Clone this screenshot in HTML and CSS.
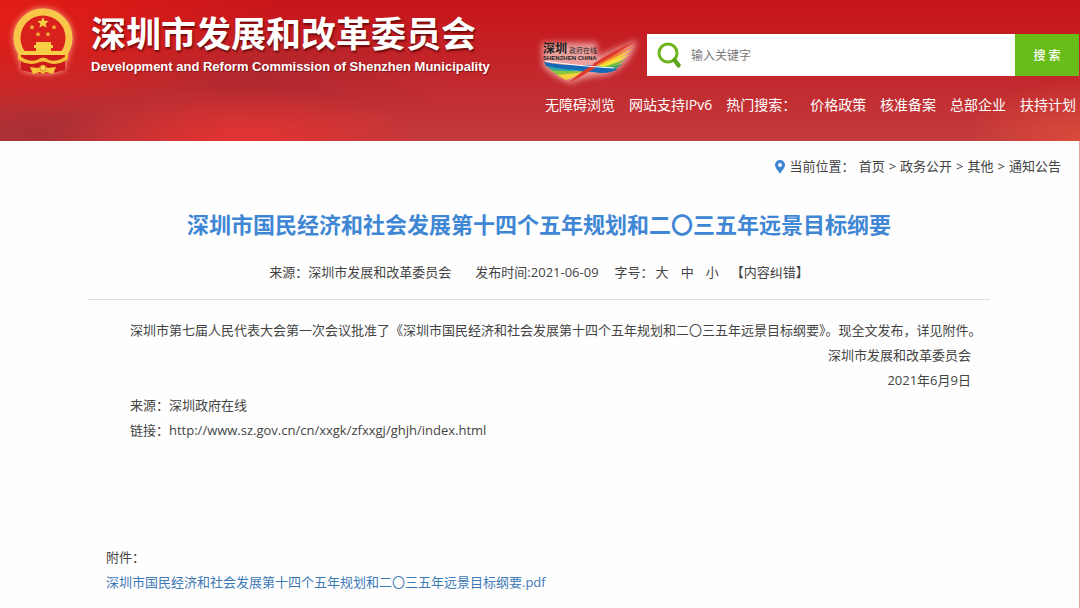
FILE: index.html
```html
<!DOCTYPE html>
<html lang="zh-CN">
<head>
    <meta charset="UTF-8">
    <meta name="viewport" content="width=device-width, initial-scale=1.0">
    <title>深圳市发展和改革委员会</title>
    <link rel="stylesheet" href="styles.css">
</head>
<body>
    <header class="header">
        <div class="brand">
            <svg class="emblem" viewBox="0 0 72 74" aria-hidden="true">
                <path d="M14 52 L15 65 Q36 72 57 65 L58 52Z" fill="#c5161b"/>
                <circle cx="36" cy="33" r="26" fill="#d9201c" stroke="#f8c649" stroke-width="7"/>
                <path d="M14 50 L14 65 Q36 71 58 65 L58 50Z" fill="#cb191b"/>
                <path d="M36 12l1.600 3.800 4.100.3-3.100 2.700 1 4-3.600-2.200-3.600 2.200 1-4-3.100-2.700 4.100-.3z" fill="#f9cf45"/>
                <g fill="#f4b93a">
                    <path id="star" d="M25 19.500l.8 1.700 1.900.2-1.400 1.200.4 1.900-1.700-1-1.700 1 .4-1.900-1.400-1.200 1.900-.2z"/>
                    <use href="#star" x="22"/>
                    <use href="#star" x="6" y="7"/>
                    <use href="#star" x="16" y="7"/>
                </g>
                <path d="M29 37h15v3h2v3h-2v3h13v4H16v-4h13v-3h-2v-3h2z" fill="#f9cf45"/>
                <path d="M11 49Q20 58 30 55Q36 50 42 55Q52 58 61 49L61 54Q51 61 42 58Q36 55 30 58Q20 61 11 54Z" fill="#f6bf38"/>
                <path d="M23 62l8 1 5-3 5 3 8-1-3 7-7-2-3 2-3-2-7 2z" fill="#f8c63c"/>
                <circle cx="36" cy="63" r="3" fill="#fbd653" stroke="#dd7c20"/>
            </svg>
            <div class="brand-text">
                <h1>深圳市发展和改革委员会</h1>
                <p>Development and Reform Commission of Shenzhen Municipality</p>
            </div>
        </div>

        <div class="header-tools">
            <div class="search-row">
                <a href="#" class="portal" aria-label="深圳政府在线">
                    <svg viewBox="0 0 100 46" aria-hidden="true">
                        <path class="glow" d="M2 3H57V17L97 0Q90 27 66 35Q44 36 31 43Q15 38 3 26Z"/>
                        <path d="M96 1Q72 11 53 24L58 26Z" fill="#e13a2c"/>
                        <path d="M94 5L56 25L62 27Z" fill="#ef7f2b"/>
                        <path d="M93 9L57 26L65 28Z" fill="#f8cf30"/>
                        <path d="M90 14L58 27L67 29Z" fill="#f1e63c"/>
                        <path d="M87 19L60 28L69 30Z" fill="#77bd43"/>
                        <path d="M83 24L60 29L70 32Z" fill="#36a66b"/>
                        <path d="M4 22Q25 26 48 25L78 29Q68 35 53 32Q24 31 6 26Z" fill="#1769b8"/>
                        <path d="M6 26Q22 30 42 30L18 34Z" fill="#2ca9a3"/>
                        <path d="M10 30Q28 32 45 31L21 37Z" fill="#8cc63f"/>
                        <path d="M17 35L46 32L26 40Z" fill="#f3d23a"/>
                        <path d="M29 42Q42 31 57 22L55 28Q42 36 33 41Z" fill="#df382d"/>
                        <path d="M5 21Q37 26 74 28" fill="none" stroke="#fff"/>
                        <text class="logo-name" x="3" y="13">深圳</text>
                        <text class="logo-sub" x="29" y="13">政府在线</text>
                        <text class="logo-latin" x="3" y="20">SHENZHEN CHINA</text>
                    </svg>
                </a>
                <form class="search" role="search">
                    <svg class="search-icon" viewBox="0 0 26 28" aria-hidden="true">
                        <circle cx="11" cy="12" r="9" fill="none" stroke="#6cb51b" stroke-width="3"/>
                        <path d="M15 19l3-3 6 8-2 3-2-1z" fill="#5ba51a"/>
                    </svg>
                    <input type="text" placeholder="输入关键字" aria-label="输入关键字">
                    <button type="submit">搜 索</button>
                </form>
            </div>
            <nav class="links">
                <a href="#">无障碍浏览</a>
                <a href="#">网站支持IPv6</a>
                <span>热门搜索：</span>
                <a href="#">价格政策</a>
                <a href="#">核准备案</a>
                <a href="#">总部企业</a>
                <a href="#">扶持计划</a>
            </nav>
        </div>
    </header>

    <main class="page">
        <nav class="breadcrumb">
            <svg class="pin" viewBox="0 0 12 14" aria-hidden="true">
                <path fill-rule="evenodd" d="M6 0a5 5 0 0 1 5 5c0 3-3 5-5 9C4 10 1 8 1 5a5 5 0 0 1 5-5zm0 3a2 2 0 1 0 0 4 2 2 0 0 0 0-4z" fill="#3b83d3"/>
            </svg>
            <span>当前位置：</span>
            <a href="#">首页</a>
            <span>&gt;</span>
            <a href="#">政务公开</a>
            <span>&gt;</span>
            <a href="#">其他</a>
            <span>&gt;</span>
            <a href="#">通知公告</a>
        </nav>

        <article class="article">
            <h2>深圳市国民经济和社会发展第十四个五年规划和二〇三五年远景目标纲要</h2>
            <div class="meta">
                <span>来源：深圳市发展和改革委员会</span>
                <span class="date">发布时间:2021-06-09</span>
                <div class="font-size">
                    <span>字号：</span>
                    <button type="button">大</button>
                    <button type="button">中</button>
                    <button type="button">小</button>
                </div>
                <a href="#">【内容纠错】</a>
            </div>
            <div class="content">
                <p>深圳市第七届人民代表大会第一次会议批准了《深圳市国民经济和社会发展第十四个五年规划和二〇三五年远景目标纲要》。现全文发布，详见附件。</p>
                <p class="sign">深圳市发展和改革委员会</p>
                <p class="sign">2021年6月9日</p>
                <p>来源：深圳政府在线</p>
                <p>链接：http://www.sz.gov.cn/cn/xxgk/zfxxgj/ghjh/index.html</p>
            </div>
            <div class="attachment">
                <p>附件：</p>
                <a href="#">深圳市国民经济和社会发展第十四个五年规划和二〇三五年远景目标纲要.pdf</a>
            </div>
        </article>
    </main>
</body>
</html>
```

FILE: styles.css
```css
:root {
    --text-color: #444;
    --title-color: #3f87d4;
    --link-color: #3d79b5;
    --search-green: #68bd18;
}

* {
    margin: 0;
    padding: 0;
    box-sizing: border-box;
}

body {
    font-family: "Open Sans", "Noto Sans CJK SC", sans-serif;
    font-size: 13px;
    line-height: 25px;
    color: var(--text-color);
    background: #fefefe;
}

a {
    color: inherit;
    text-decoration: none;
}

button,
input {
    font: inherit;
    color: inherit;
    border: none;
    background: none;
}

/* Header */
.header {
    display: flex;
    justify-content: space-between;
    height: 141px;
    color: white;
    background:
        radial-gradient(ellipse 200px 60px at 22% 105%, rgba(236, 48, 46, 0.9), transparent),
        radial-gradient(ellipse 120px 60px at 100% 100%, rgba(224, 78, 58, 0.8), transparent),
        radial-gradient(ellipse 280px 110px at 0% 10%, rgba(230, 30, 22, 0.9), transparent),
        radial-gradient(ellipse 200px 60px at 4% 95%, rgba(160, 44, 50, 0.8), transparent),
        radial-gradient(ellipse 200px 50px at 24% 55%, rgba(165, 42, 48, 0.6), transparent),
        linear-gradient(180deg, #c81519 0%, #c2262b 50%, #c23b3d 100%);
}

.brand {
    display: flex;
    align-items: flex-start;
    gap: 12px;
    padding: 5px 0 0 7px;
}

.emblem {
    width: 72px;
    height: 74px;
    filter: drop-shadow(0 0 3px rgba(255, 190, 150, 0.9));
}

.brand-text {
    padding-top: 8px;
    white-space: nowrap;
}

.brand h1 {
    font-size: 35px;
    line-height: 42px;
    font-weight: 700;
    text-shadow: 1px 2px 2px rgba(70, 0, 0, 0.7);
}

.brand p {
    font-family: "Liberation Sans", Arial, sans-serif;
    font-size: 13px;
    line-height: 24px;
    font-weight: 700;
    text-shadow: 1px 1px 1px rgba(70, 0, 0, 0.5);
}

.header-tools {
    flex: 0 0 50%;
    padding: 34px 1px 0 0;
}

.search-row {
    display: flex;
    gap: 7px;
}

.portal {
    flex: 0 0 100px;
    padding-top: 6px;
}

.portal svg {
    display: block;
    width: 100px;
    height: 46px;
    overflow: visible;
}

.portal .glow {
    fill: rgba(255, 215, 210, 0.7);
    filter: blur(3px);
}

.logo-name,
.logo-sub {
    font-family: "Noto Sans CJK SC", sans-serif;
    fill: #222;
}

.logo-name {
    font-size: 12px;
    font-weight: 700;
}

.logo-sub {
    font-size: 7px;
}

.logo-latin {
    font-family: "Liberation Sans", Arial, sans-serif;
    font-size: 6px;
    font-weight: 700;
    fill: #222;
}

.search {
    flex: 1;
    display: flex;
    align-items: center;
    height: 42px;
    padding-left: 10px;
    background: white;
    font-size: 12px;
}

.search-icon {
    width: 26px;
    height: 28px;
}

.search input {
    flex: 1;
    min-width: 0;
    height: 42px;
    padding: 0 8px;
    color: #555;
    outline: none;
}

.search input::placeholder {
    color: #777;
}

.search button {
    width: 64px;
    height: 42px;
    background: var(--search-green);
    color: white;
    font-weight: 500;
    cursor: pointer;
}

.links {
    display: flex;
    justify-content: space-between;
    padding: 6px 3px 0 5px;
    font-size: 14px;
    white-space: nowrap;
}

/* Page */
.page {
    border-right: 1px solid #dfa3a3;
    min-height: calc(100vh - 141px);
}

.breadcrumb {
    display: flex;
    justify-content: flex-end;
    align-items: center;
    gap: 4px;
    padding: 13px 18px 0 0;
}

.breadcrumb .pin {
    width: 12px;
    height: 14px;
}

.article {
    padding: 0 89px 0 88px;
}

.article h2 {
    padding-top: 28px;
    font-size: 22px;
    line-height: 34px;
    font-weight: 700;
    text-align: center;
    color: var(--title-color);
}

.meta {
    display: flex;
    justify-content: center;
    padding: 19px 0 14px;
    border-bottom: 1px solid #ddd;
}

.meta .date {
    margin: 0 16px 0 24px;
}

.font-size {
    display: flex;
    gap: 12px;
    margin-right: 12px;
}

.font-size span {
    margin-right: -10px;
}

.font-size button {
    cursor: pointer;
}

.content {
    padding: 18px 0 0 42px;
}

.content p {
    white-space: nowrap;
}

.content .sign {
    padding-right: 19px;
    text-align: right;
}

.attachment {
    padding: 102px 0 12px 18px;
}

.attachment a {
    color: var(--link-color);
}
```
